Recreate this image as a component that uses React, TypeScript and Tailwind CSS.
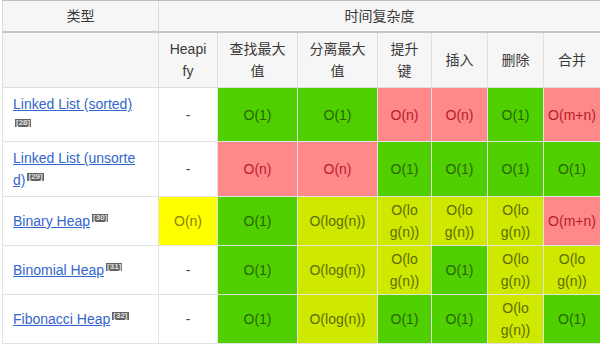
import React from "react";

type K = "w" | "g" | "r" | "l" | "y";

const tone: Record<K, string> = {
  w: "bg-white text-[#444444]",
  g: "bg-[#50d000] text-[#2a6600]",
  r: "bg-[#ff8888] text-[#b81c2c]",
  l: "bg-[#cee800] text-[#5c6d00]",
  y: "bg-[#ffff00] text-[#8a7f00]",
};

const LG = "O(lo|g(n))";

type Row = {
  name: React.ReactNode;
  h: string;
  cells: [string, K][];
};

const Sup = ({ n }: { n: string }) => (
  <span className="ml-[2px] inline-block bg-[#626262] px-px text-[8px] font-bold leading-[8px] text-[#e2e2e2] align-[6px] no-underline">
    [{n}]
  </span>
);

const rows: Row[] = [
  {
    name: (
      <>
        <a className="text-[#3366cc] underline">Linked List (sorted)</a>
        <br />
        <Sup n="28" />
      </>
    ),
    h: "h-[54px]",
    cells: [
      ["-", "w"],
      ["O(1)", "g"],
      ["O(1)", "g"],
      ["O(n)", "r"],
      ["O(n)", "r"],
      ["O(1)", "g"],
      ["O(m+n)", "r"],
    ],
  },
  {
    name: (
      <>
        <a className="text-[#3366cc] underline">
          Linked List (unsorte
          <br />
          d)
        </a>
        <Sup n="29" />
      </>
    ),
    h: "h-[55px]",
    cells: [
      ["-", "w"],
      ["O(n)", "r"],
      ["O(n)", "r"],
      ["O(1)", "g"],
      ["O(1)", "g"],
      ["O(1)", "g"],
      ["O(1)", "g"],
    ],
  },
  {
    name: (
      <>
        <a className="text-[#3366cc] underline">Binary Heap</a>
        <Sup n="30" />
      </>
    ),
    h: "h-[49px]",
    cells: [
      ["O(n)", "y"],
      ["O(1)", "g"],
      ["O(log(n))", "l"],
      [LG, "l"],
      [LG, "l"],
      [LG, "l"],
      ["O(m+n)", "r"],
    ],
  },
  {
    name: (
      <>
        <a className="text-[#3366cc] underline">Binomial Heap</a>
        <Sup n="31" />
      </>
    ),
    h: "h-[49px]",
    cells: [
      ["-", "w"],
      ["O(1)", "g"],
      ["O(log(n))", "l"],
      [LG, "l"],
      ["O(1)", "g"],
      [LG, "l"],
      [LG, "l"],
    ],
  },
  {
    name: (
      <>
        <a className="text-[#3366cc] underline">Fibonacci Heap</a>
        <Sup n="32" />
      </>
    ),
    h: "h-[49px]",
    cells: [
      ["-", "w"],
      ["O(1)", "g"],
      ["O(log(n))", "l"],
      ["O(1)", "g"],
      ["O(1)", "g"],
      [LG, "l"],
      ["O(1)", "g"],
    ],
  },
];

const heads = ["Heapi|fy", "查找最大|值", "分离最大|值", "提升|键", "插入", "删除", "合并"];

const Lines = ({ t }: { t: string }) => (
  <>
    {t.split("|").map((p, i) => (
      <React.Fragment key={i}>
        {i > 0 && <br />}
        {p}
      </React.Fragment>
    ))}
  </>
);

export default function App() {
  return (
    <div className="h-[345px] w-[600px] overflow-hidden bg-white font-['Liberation_Sans','Noto_Sans_CJK_SC',sans-serif] text-[14px] leading-[22px]">
      <div className="ml-[2px] grid grid-cols-[156px_59px_80px_80px_54px_56px_56px_57px] border-t border-[#bdbdbd]">
        {/* header row 1 */}
        <div className="flex h-[32px] items-center justify-center border-b-2 border-l border-b-[#c6c6c6] border-l-[#dcdcdc] bg-[#f6f6f6] text-[#3a3a3a]">
          类型
        </div>
        <div className="col-span-7 flex h-[32px] items-center justify-center border-b-2 border-l border-b-[#c6c6c6] border-l-[#dcdcdc] bg-[#f6f6f6] text-[#3a3a3a]">
          时间复杂度
        </div>
        {/* header row 2 */}
        <div className="h-[55px] border-b border-l border-[#dedede] bg-[#f6f6f6]" />
        {heads.map((h) => (
          <div
            key={h}
            className="flex h-[55px] items-center justify-center whitespace-nowrap border-b border-l border-[#dedede] bg-[#f6f6f6] text-center text-[#3a3a3a]"
          >
            <span>
              <Lines t={h} />
            </span>
          </div>
        ))}
        {/* body */}
        {rows.map((r, ri) => (
          <React.Fragment key={ri}>
            <div
              className={`${r.h} flex items-center whitespace-nowrap border-b border-l border-[#e2e2e2] bg-white pl-[10px]`}
            >
              <div>{r.name}</div>
            </div>
            {r.cells.map(([t, k], ci) => (
              <div
                key={ci}
                className={`${r.h} ${tone[k]} flex items-center justify-center whitespace-nowrap border-b border-l border-[#e2e2e2] text-center`}
              >
                <span>
                  <Lines t={t} />
                </span>
              </div>
            ))}
          </React.Fragment>
        ))}
      </div>
    </div>
  );
}
